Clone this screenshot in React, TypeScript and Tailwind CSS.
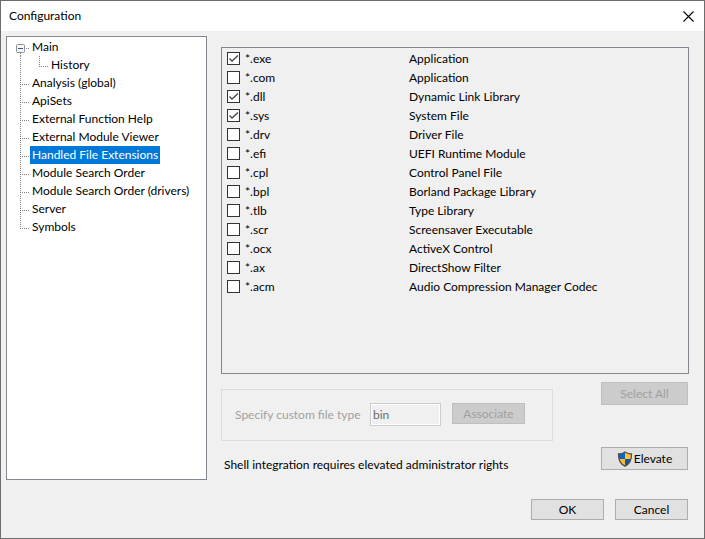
import React from "react";

const LINE = { stroke: "#808080", strokeWidth: 1, strokeDasharray: "1 1", shapeRendering: "crispEdges" as const, fill: "none" };

type Node = { label: string; kind: "root" | "child" | "item" | "last" };

const nodes: Node[] = [
  { label: "Main", kind: "root" },
  { label: "History", kind: "child" },
  { label: "Analysis (global)", kind: "item" },
  { label: "ApiSets", kind: "item" },
  { label: "External Function Help", kind: "item" },
  { label: "External Module Viewer", kind: "item" },
  { label: "Handled File Extensions", kind: "item" },
  { label: "Module Search Order", kind: "item" },
  { label: "Module Search Order (drivers)", kind: "item" },
  { label: "Server", kind: "item" },
  { label: "Symbols", kind: "last" },
];

const extensions = [
  { ext: "exe", name: "Application", on: true },
  { ext: "com", name: "Application", on: false },
  { ext: "dll", name: "Dynamic Link Library", on: true },
  { ext: "sys", name: "System File", on: true },
  { ext: "drv", name: "Driver File", on: false },
  { ext: "efi", name: "UEFI Runtime Module", on: false },
  { ext: "cpl", name: "Control Panel File", on: false },
  { ext: "bpl", name: "Borland Package Library", on: false },
  { ext: "tlb", name: "Type Library", on: false },
  { ext: "scr", name: "Screensaver Executable", on: false },
  { ext: "ocx", name: "ActiveX Control", on: false },
  { ext: "ax", name: "DirectShow Filter", on: false },
  { ext: "acm", name: "Audio Compression Manager Codec", on: false },
];

function Branch({ kind }: { kind: Node["kind"] }) {
  const width = kind === "child" ? 42 : 23;
  return (
    <svg width={width} height="18" viewBox={`0 0 ${width} 18`} className="shrink-0" aria-hidden="true">
      {kind === "root" && (
        <>
          <path d="M13.5 15V18M19 10.5H23" {...LINE} />
          <rect x="9.5" y="6.5" width="8" height="8" rx="1" fill="#f6f6f6" stroke="#919191" />
          <path d="M11 10.5H16" stroke="#3353a4" />
        </>
      )}
      {kind === "child" && <path d="M13.5 0V18M32.5 0V10M32 10.5H42" {...LINE} />}
      {kind === "item" && <path d="M13.5 0V18M13 10.5H23" {...LINE} />}
      {kind === "last" && <path d="M13.5 0V10M13 10.5H23" {...LINE} />}
    </svg>
  );
}

function Shield() {
  return (
    <svg width="16" height="16" viewBox="0 0 16 16" aria-hidden="true">
      <defs>
        <clipPath id="shield">
          <path d="M8 1C6 2.5 4 3 1.7 3C1.5 9 3 12.800 8 15.200C13 12.800 14.500 9 14.300 3C12 3 10 2.500 8 1Z" />
        </clipPath>
      </defs>
      <g clipPath="url(#shield)">
        <rect width="8" height="8" fill="#0f63c4" />
        <rect x="8" width="8" height="8" fill="#ffc32e" />
        <rect y="8" width="8" height="8" fill="#ffb92b" />
        <rect x="8" y="8" width="8" height="8" fill="#0a55b5" />
      </g>
      <path d="M8 1C6 2.500 4 3 1.500 3C1.300 9 3 12.800 8 15.200C13 12.800 14.700 9 14.500 3C12 3 10 2.500 8 1Z" fill="none" stroke="#4d5052" strokeWidth="1.300" />
    </svg>
  );
}

function Button({ children, className, disabled }: { children: React.ReactNode; className: string; disabled?: boolean }) {
  return (
    <button
      type="button"
      disabled={disabled}
      className={`flex items-center justify-center border border-[#adadad] bg-[#e1e1e1] text-black disabled:border-[#bfbfbf] disabled:bg-[#cccccc] disabled:text-[#a0a0a0] ${className}`}
    >
      {children}
    </button>
  );
}

export default function App() {
  return (
    <main className="flex min-h-screen flex-col border border-[#6d6d6d] bg-[#f0f0f0] font-['Lato','Noto_Sans',sans-serif] text-[12px] leading-[18px] text-black">
      <header className="flex h-[30px] items-center justify-between bg-white pr-2.5 pl-2">
        <h1>Configuration</h1>
        <button type="button" aria-label="Close">
          <svg width="11" height="11" viewBox="0 0 11 11" aria-hidden="true">
            <path d="M0.500 0.500L10.500 10.500M10.500 0.500L0.500 10.500" stroke="#000" strokeWidth="1.100" />
          </svg>
        </button>
      </header>

      <div className="flex gap-3.5 pt-[5px] pr-[15px] pl-[5px]">
        <nav aria-label="Settings pages" className="w-[201px] shrink-0 border border-[#828790] bg-white pt-px">
          <ul>
            {nodes.map((node) => (
              <li key={node.label} className="flex">
                <Branch kind={node.kind} />
                <button
                  type="button"
                  className={`px-0.5 whitespace-nowrap ${node.label === "Handled File Extensions" ? "bg-[#0078d7] text-white" : ""}`}
                >
                  {node.label}
                </button>
              </li>
            ))}
          </ul>
        </nav>

        <section className="flex min-w-0 flex-1 flex-col pt-[11px] pb-2.5">
          <div className="min-h-[327px] border border-[#828790] pt-px">
            <table className="w-full table-fixed border-collapse">
              <tbody>
                {extensions.map(({ ext, name, on }) => (
                  <tr key={ext} className="h-[19px]">
                    <td className="w-[187px] p-0 pl-[5px]">
                      <label className="flex items-center gap-[5px]">
                        <span className="grid">
                          <input
                            type="checkbox"
                            defaultChecked={on}
                            className="peer col-start-1 row-start-1 size-[13px] appearance-none border border-[#333333] bg-white"
                          />
                          <svg
                            width="13"
                            height="13"
                            viewBox="0 0 13 13"
                            className="pointer-events-none invisible col-start-1 row-start-1 peer-checked:visible"
                            aria-hidden="true"
                          >
                            <path d="M2.500 6.500L5 9L11 3.500" fill="none" stroke="#444" strokeWidth="1.300" />
                          </svg>
                        </span>
                        *.{ext}
                      </label>
                    </td>
                    <td className="p-0">{name}</td>
                  </tr>
                ))}
              </tbody>
            </table>
          </div>

          <div className="flex items-start justify-between pt-2 pr-px">
            <div className="mt-[7px] flex h-[52px] w-[332px] items-start border border-[#dcdcdc] pt-[13px] pl-[13px]">
              <label htmlFor="custom-type" className="w-[135px] pt-[3px] whitespace-nowrap text-[#a0a0a0]">
                Specify custom file type
              </label>
              <input
                id="custom-type"
                type="text"
                disabled
                defaultValue="bin"
                className="h-[23px] w-[71px] border border-[#cccccc] bg-[#f0f0f0] px-0.5 text-[#6d6d6d] ring-1 ring-white ring-inset"
              />
              <Button disabled className="ml-[11px] h-[21px] w-[73px]">Associate</Button>
            </div>
            <Button disabled className="h-[23px] w-[87px]">Select All</Button>
          </div>

          <div className="flex items-end justify-between pt-1.5 pr-px pl-[3px]">
            <p className="-mb-1">Shell integration requires elevated administrator rights</p>
            <Button className="h-[23px] w-[87px] gap-px">
              <Shield />
              Elevate
            </Button>
          </div>
        </section>
      </div>

      <footer className="flex justify-end gap-[11px] pt-[19px] pr-4 pb-[18px]">
        <Button className="h-[21px] w-[73px]">OK</Button>
        <Button className="h-[21px] w-[73px]">Cancel</Button>
      </footer>
    </main>
  );
}
